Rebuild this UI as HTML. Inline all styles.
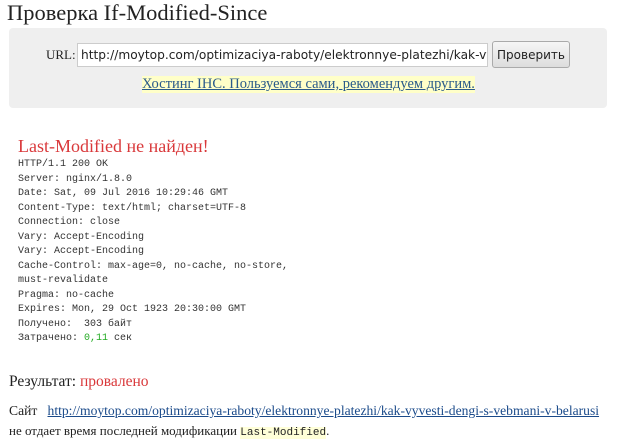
<!DOCTYPE html>
<html><head><meta charset="utf-8"><style>
body{margin:0;width:620px;height:441px;background:#fff;font-family:"Liberation Serif","DejaVu Serif",serif;color:#222;position:relative;overflow:hidden}
.a{position:absolute;white-space:nowrap}
h1{position:absolute;left:7px;top:0px;margin:0;font-weight:normal;font-size:22.5px;color:#222;white-space:nowrap}
.box{position:absolute;left:9px;top:28px;width:598px;height:80px;background:#efefef;border-radius:4px}
.inp{position:absolute;left:77px;top:43px;background:#fff;border:1px solid #ccc;font-family:"DejaVu Sans","Liberation Sans",sans-serif;font-size:12.2px;line-height:22px;padding-left:3px;overflow:hidden;white-space:nowrap;box-sizing:border-box;width:411px;height:24px}
.btn{position:absolute;left:492px;top:41px;width:78px;height:27px;border:1px solid #aaa;border-radius:3px;background:linear-gradient(#f6f6f6,#ddd);font-family:"DejaVu Sans",sans-serif;font-size:12px;line-height:26px;text-align:center;box-sizing:border-box}
.mono{position:absolute;left:18px;top:158px;font-family:"Liberation Mono",monospace;font-size:10px;line-height:14.5px;color:#333;white-space:pre}
a{color:#1a4a8a}
</style></head><body>
<h1>Проверка If-Modified-Since</h1>
<div class="box"></div>
<div class="a" style="left:46px;top:47px;font-size:13px">URL:</div>
<div class="inp">http://moytop.com/optimizaciya-raboty/elektronnye-platezhi/kak-vyvesti</div>
<div class="btn">Проверить</div>
<div class="a" style="left:142px;top:76px;font-size:14.5px;background:#ffffc8"><a style="color:#2a5a8a;text-decoration:underline">Хостинг IHC. Пользуемся сами, рекомендуем другим.</a></div>
<div class="a" style="left:18px;top:136px;font-size:18px;color:#d9383a">Last-Modified не найден!</div>
<div class="mono">HTTP/1.1 200 OK
Server: nginx/1.8.0
Date: Sat, 09 Jul 2016 10:29:46 GMT
Content-Type: text/html; charset=UTF-8
Connection: close
Vary: Accept-Encoding
Vary: Accept-Encoding
Cache-Control: max-age=0, no-cache, no-store,
must-revalidate
Pragma: no-cache
Expires: Mon, 29 Oct 1923 20:30:00 GMT
Получено:  303 байт
Затрачено: <span style="color:#2a2">0,11</span> сек</div>
<div class="a" style="left:9px;top:373px;font-size:15.5px">Результат: <span style="color:#d9383a">провалено</span></div>
<div class="a" style="left:9px;top:403px;font-size:13.6px">Сайт &nbsp; <a style="text-decoration:underline">http://moytop.com/optimizaciya-raboty/elektronnye-platezhi/kak-vyvesti-dengi-s-vebmani-v-belarusi</a></div>
<div class="a" style="left:9px;top:423px;font-size:13px">не отдает время последней модификации <span style="font-family:'Liberation Mono',monospace;font-size:11px;background:#ffffd8">Last-Modified</span>.</div>
</body></html>
